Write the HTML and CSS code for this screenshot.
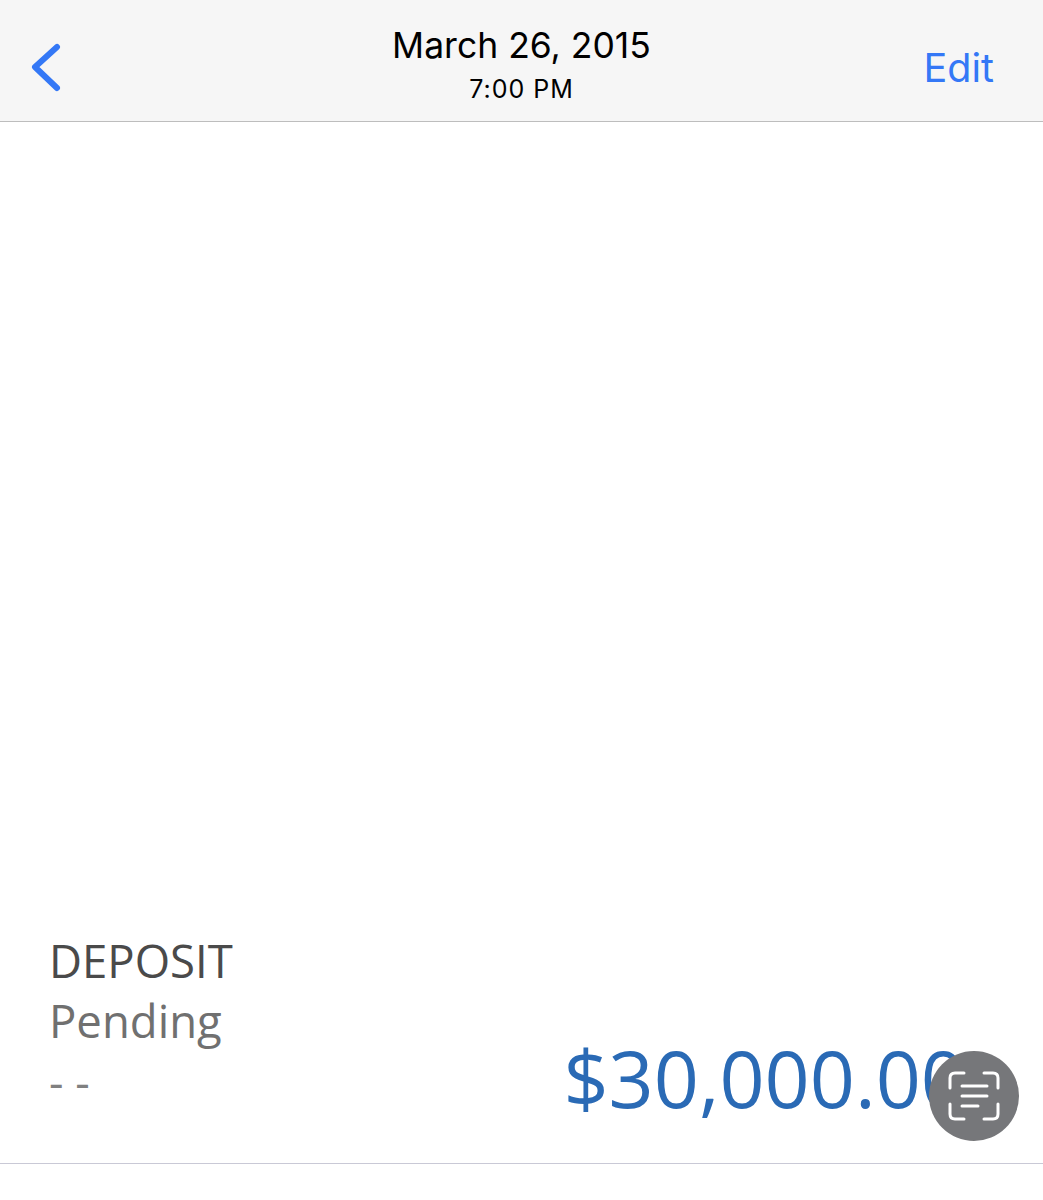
FILE: index.html
```html
<!DOCTYPE html>
<html lang="en">
<head>
  <meta charset="UTF-8" />
  <title>Transaction</title>
  <link rel="stylesheet" href="styles.css">
</head>
<body>

<header class="nav">
  <a class="back" href="#" aria-label="Back">
    <svg width="32" height="50" viewBox="0 0 32 50">
      <path d="M27 5 L5 25 L27 46" fill="none" stroke="#3478f6" stroke-width="6" stroke-linecap="round" stroke-linejoin="round"/>
    </svg>
  </a>
  <div class="nav-title">
    <div class="nav-date">March 26, 2015</div>
    <div class="nav-time">7:00 PM</div>
  </div>
  <a class="edit" href="#">Edit</a>
</header>

<main class="content">
  <div class="txn">
    <div class="txn-info">
      <div class="txn-type">DEPOSIT</div>
      <div class="txn-status">Pending</div>
      <div class="txn-note">- -</div>
    </div>
    <div class="txn-amount">$30,000.00</div>
  </div>
</main>

<button class="scan" aria-label="Live text">
  <svg width="54" height="52" viewBox="0 0 54 52">
    <g fill="none" stroke="#fff" stroke-width="3" stroke-linecap="round">
      <path d="M3 18 V8 Q3 3 8 3 H17"/>
      <path d="M37 3 H46 Q51 3 51 8 V18"/>
      <path d="M3 34 V44 Q3 49 8 49 H17"/>
      <path d="M37 49 H46 Q51 49 51 44 V34"/>
      <path d="M15 16 H40"/>
      <path d="M15 26 H40"/>
      <path d="M15 36 H31"/>
    </g>
  </svg>
</button>

</body>
</html>
```

FILE: styles.css
```css
body {
  margin: 0;
  height: 1200px;
  background: #fff;
  overflow: hidden;
  display: flex;
  flex-direction: column;
  font-family: Inter, 'Liberation Sans', sans-serif;
}
.nav {
  height: 121px;
  flex: none;
  background: #f6f6f6;
  border-bottom: 1px solid #bdbdbd;
  display: grid;
  grid-template-columns: 1fr auto 1fr;
  align-items: center;
  padding: 0 30px;
}
.back {
  display: flex;
  margin-top: 13px;
}
.nav-title {
  text-align: center;
  color: #000;
  padding-top: 6px;
}
.nav-date {
  font-size: 35.5px;
  line-height: 46px;
}
.nav-time {
  font-size: 25px;
  line-height: 32px;
  letter-spacing: 1px;
  margin-top: 4px;
}
.edit {
  color: #3478f6;
  font-size: 39.5px;
  text-decoration: none;
  margin: 14px 19px 0 0;
  justify-self: end;
}
.content {
  height: 1042px;
  flex: none;
  box-sizing: border-box;
  border-bottom: 1px solid #c9c9d6;
  display: flex;
  flex-direction: column;
  justify-content: flex-end;
  font-family: 'Open Sans', sans-serif;
}
.txn {
  display: flex;
  justify-content: space-between;
  align-items: flex-end;
  padding: 0 0 41px 49px;
}
.txn-info {
  margin-bottom: 8px;
}
.txn-type {
  font-size: 45.5px;
  line-height: 59px;
  color: #4a4a4a;
}
.txn-status {
  font-size: 45.5px;
  line-height: 60px;
  color: #707070;
}
.txn-note {
  font-size: 45px;
  line-height: 64px;
  color: #808080;
}
.txn-amount {
  font-size: 79px;
  line-height: 88px;
  color: #2a6ab5;
  margin-right: 77px;
}
.scan {
  position: absolute;
  left: 929px;
  top: 1051px;
  width: 90px;
  height: 90px;
  border: none;
  border-radius: 50%;
  background: #76777a;
  display: flex;
  align-items: center;
  justify-content: center;
  padding: 0;
}
```
